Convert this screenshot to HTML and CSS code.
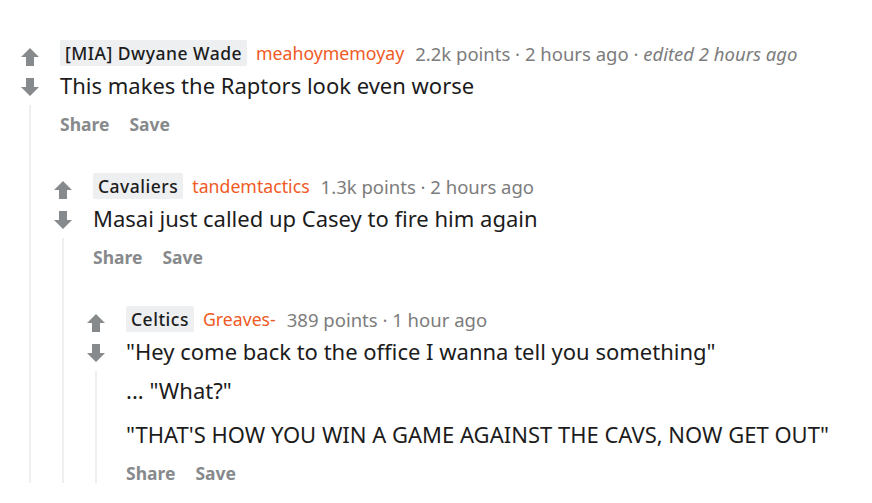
FILE: index.html
```html
<!DOCTYPE html>
<html>
<head>
<meta charset="utf-8">
<link rel="stylesheet" href="styles.css">
</head>
<body>
<div class="thread">
  <div class="comment">
    <div class="rail">
      <svg class="arrow" viewBox="0 0 20 20"><path d="M10 1 L19 10 H14 V19 H6 V10 H1 Z"/></svg>
      <svg class="arrow down" viewBox="0 0 20 20"><path d="M10 19 L19 10 H14 V1 H6 V10 H1 Z"/></svg>
      <div class="line"></div>
    </div>
    <div class="content">
      <div class="main">
        <div class="header">
          <span class="flair">[MIA] Dwyane Wade</span>
          <span class="user">meahoymemoyay</span>
          <span class="meta">2.2k points · 2 hours ago · <em>edited 2 hours ago</em></span>
        </div>
        <div class="body">
          <p>This makes the Raptors look even worse</p>
        </div>
        <div class="actions"><span>Share</span><span>Save</span></div>
      </div>
      <div class="children">
        <div class="comment">
          <div class="rail">
            <svg class="arrow" viewBox="0 0 20 20"><path d="M10 1 L19 10 H14 V19 H6 V10 H1 Z"/></svg>
            <svg class="arrow down" viewBox="0 0 20 20"><path d="M10 19 L19 10 H14 V1 H6 V10 H1 Z"/></svg>
            <div class="line"></div>
          </div>
          <div class="content">
            <div class="main">
              <div class="header">
                <span class="flair">Cavaliers</span>
                <span class="user">tandemtactics</span>
                <span class="meta">1.3k points · 2 hours ago</span>
              </div>
              <div class="body">
                <p>Masai just called up Casey to fire him again</p>
              </div>
              <div class="actions"><span>Share</span><span>Save</span></div>
            </div>
            <div class="children">
              <div class="comment">
                <div class="rail">
                  <svg class="arrow" viewBox="0 0 20 20"><path d="M10 1 L19 10 H14 V19 H6 V10 H1 Z"/></svg>
                  <svg class="arrow down" viewBox="0 0 20 20"><path d="M10 19 L19 10 H14 V1 H6 V10 H1 Z"/></svg>
                  <div class="line"></div>
                </div>
                <div class="content">
                  <div class="main last">
                    <div class="header">
                      <span class="flair">Celtics</span>
                      <span class="user">Greaves-</span>
                      <span class="meta">389 points · 1 hour ago</span>
                    </div>
                    <div class="body">
                      <p>"Hey come back to the office I wanna tell you something"</p>
                      <p class="p2">... "What?"</p>
                      <p class="p3">"THAT'S HOW YOU WIN A GAME AGAINST THE CAVS, NOW GET OUT"</p>
                    </div>
                    <div class="actions"><span>Share</span><span>Save</span></div>
                  </div>
                </div>
              </div>
            </div>
          </div>
        </div>
      </div>
    </div>
  </div>
</div>
</body>
</html>
```
FILE: styles.css
```css
html, body {
  margin: 0;
  padding: 0;
  background: #ffffff;
}
body {
  font-family: "Noto Sans", "Open Sans", sans-serif;
  color: #1c1c1c;
  overflow: hidden;
  height: 503px;
}
.thread {
  padding: 40px 0 60px 13px;
}
.comment {
  display: flex;
}
.rail {
  width: 33px;
  flex: none;
  display: flex;
  flex-direction: column;
  align-items: center;
  padding-top: 7px;
}
.arrow {
  width: 20px;
  height: 20px;
  fill: #878a8c;
  display: block;
}
.arrow.down {
  margin-top: 10px;
}
.line {
  flex: 1;
  width: 2px;
  margin-top: 8px;
  background: #edeff1;
}
.content {
  flex: 1;
  min-width: 0;
}
.main {
  padding-left: 14px;
}
.header {
  display: flex;
  align-items: center;
  height: 26px;
  white-space: nowrap;
}
.flair {
  background: #edeff1;
  color: #1c1c1c;
  font-size: 17.5px;
  font-weight: 500;
  letter-spacing: 0.5px;
  line-height: 26px;
  padding: 0 5px;
  border-radius: 2px;
}
.user {
  color: #ef5a25;
  font-size: 17.7px;
  margin-left: 9px;
}
.meta {
  color: #7c7c7c;
  font-size: 18.5px;
  margin-left: 11px;
}
.meta em {
  font-style: italic;
}
.body p {
  margin: 5px 0 0;
  font-size: 22px;
  line-height: 28px;
  color: #1c1c1c;
  white-space: nowrap;
}
.body p.p2 {
  margin-top: 11px;
}
.body p.p3 {
  margin-top: 16px;
  margin-bottom: 4px;
}
.actions {
  display: flex;
  gap: 20px;
  margin-top: 15px;
  font-size: 17.5px;
  line-height: 20px;
  font-weight: 700;
  color: #878a8c;
}
.children {
  padding-top: 39px;
}
```
